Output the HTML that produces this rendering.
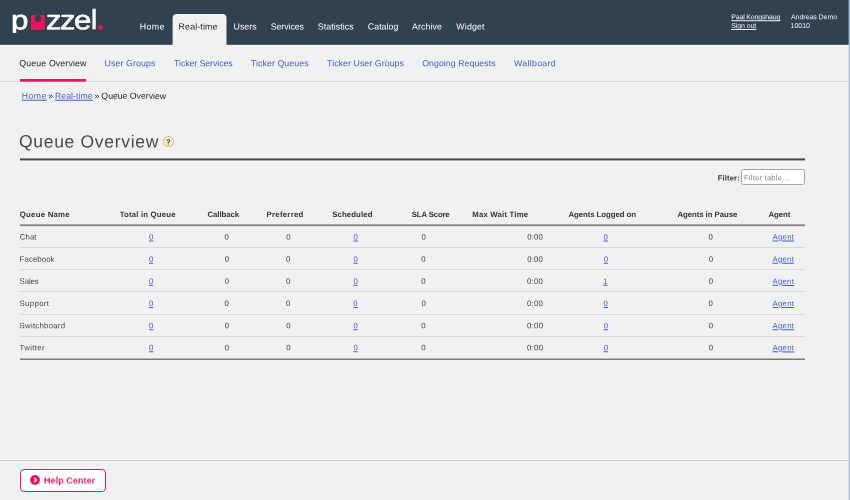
<!DOCTYPE html>
<html lang="en">
<head>
<meta charset="utf-8">
<title>Queue Overview</title>
<style>
*{box-sizing:border-box;margin:0;padding:0}
html,body{width:850px;height:500px;overflow:hidden}
body{background:#f1f1f1;font-family:"Liberation Sans",sans-serif;position:relative}
#wrap{position:absolute;left:0;top:0;width:850px;height:500px;overflow:hidden;will-change:transform}
.t{position:absolute;white-space:pre;line-height:12px;text-decoration:none;transform-origin:0 0}
.u{text-decoration:underline;text-decoration-thickness:0.7px;text-underline-offset:1px}
.b{font-weight:bold}
#hdr{position:absolute;left:0;top:0;width:850px;height:44px;background:#30414f}
#hdr2{position:absolute;left:0;top:44px;width:850px;height:1px;background:#30414f;opacity:.8}
#tab{position:absolute;left:170px;top:12px}
#logo span{position:absolute;color:#fff;font-size:27.4px;line-height:30px;-webkit-text-stroke:0.6px #fff}
#pu{position:absolute;left:30.7px;top:15px;width:14.8px;height:15px;background:#e8175d;border-radius:1.6px;overflow:hidden;color:#e8175d;font-size:10px;line-height:14px;text-align:center}
#pu:before{content:"";position:absolute;left:5.3px;top:-1px;width:4.2px;height:4px;background:#30414f}
#pu:after{content:"";position:absolute;left:4.4px;top:1.3px;width:6px;height:5.3px;background:#30414f;border-radius:50%}
#pdot{position:absolute;left:98.3px;top:25.2px;width:4.8px;height:4.8px;border-radius:50%;background:#e8175d;overflow:hidden;color:#e8175d;font-size:4px;line-height:4px}
#subline{position:absolute;left:0;top:81px;width:848px;height:1px;background:#d9d9d9}
#bar{position:absolute;left:20px;top:79px;width:66px;height:3px;background:linear-gradient(#e8175d 66.6%,rgba(232,23,93,.65) 66.6%)}
#qm{position:absolute;left:163.1px;top:135.9px;width:11px;height:10.7px;border-radius:50%;border:0.8px solid #c6bfa6;background:linear-gradient(#fefbe8,#fbecae)}
#rule{position:absolute;left:20px;top:158px;width:785px;height:3px;background:linear-gradient(#8f8f8f 33.3%,#4a4a4a 33.3%,#4a4a4a 66.6%,#a9a9a9 66.6%)}
#finput{position:absolute;left:741.3px;top:169.1px;width:63.5px;height:15.6px;border:1px solid #a5a5a5;border-radius:2.5px;background:#fff}
.hl{position:absolute;left:20px;width:785px;background:linear-gradient(#a6a6a6 33.3%,#878787 33.3%,#878787 66.6%,#dedede 66.6%);height:3px}
.hl2{position:absolute;left:20px;width:785px;background:linear-gradient(#b4b4b4 50%,#7c7c7c 50%);height:2px}
.rl{position:absolute;left:20px;width:785px;background:#d9d9d9;height:1px}
#foot{position:absolute;left:0;top:460px;width:848px;height:1px;background:#cfcfcf}
#help{position:absolute;left:19.9px;top:468.7px;width:86.1px;height:23.3px;border:1.2px solid #e8175d;border-radius:4px;background:#fff}
#hic{position:absolute;left:28.85px;top:474.1px;width:12px;height:12px}
#edge{position:absolute;left:848px;top:0;width:2px;height:500px;background:linear-gradient(90deg,rgba(166,191,221,.38) 50%,#a6bfdd 50%)}

#t0{left:139px;top:20px;font-size:8.8px;color:#fff;letter-spacing:0.425px;transform:translate(0.69px,0.55px) rotate(0.1deg)}
#t1{left:178px;top:20px;font-size:8.8px;color:#222;letter-spacing:0.141px;transform:translate(0.64px,0.55px) rotate(0.1deg)}
#t2{left:233px;top:20px;font-size:8.8px;color:#fff;letter-spacing:0.005px;transform:translate(0.56px,0.55px) rotate(0.1deg)}
#t3{left:270px;top:20px;font-size:8.8px;color:#fff;letter-spacing:-0.086px;transform:translate(0.79px,0.55px) rotate(0.1deg)}
#t4{left:317px;top:20px;font-size:8.8px;color:#fff;letter-spacing:0.065px;transform:translate(0.83px,0.55px) rotate(0.1deg)}
#t5{left:367px;top:20px;font-size:8.8px;color:#fff;letter-spacing:0.035px;transform:translate(0.84px,0.55px) rotate(0.1deg)}
#t6{left:411px;top:20px;font-size:8.8px;color:#fff;letter-spacing:0.123px;transform:translate(0.93px,0.55px) rotate(0.1deg)}
#t7{left:456px;top:20px;font-size:8.8px;color:#fff;letter-spacing:0.185px;transform:translate(0.27px,0.55px) rotate(0.1deg)}
#t8{left:731px;top:11px;font-size:7px;color:#f0f2f4;letter-spacing:-0.172px;transform:translate(0.27px,0.17px) rotate(0.1deg)}
#t9{left:731px;top:20px;font-size:7px;color:#f0f2f4;letter-spacing:-0.076px;transform:translate(0.17px,0.07px) rotate(0.1deg)}
#t10{left:790px;top:11px;font-size:7px;color:#f0f2f4;letter-spacing:-0.050px;transform:translate(1.00px,0.17px) rotate(0.1deg)}
#t11{left:790px;top:20px;font-size:7px;color:#f0f2f4;letter-spacing:-0.032px;transform:translate(0.57px,0.07px) rotate(0.1deg)}
#t12{left:19px;top:57px;font-size:8.8px;color:#222;letter-spacing:0.111px;transform:translate(0.39px,0.15px) rotate(0.1deg)}
#t13{left:104px;top:57px;font-size:8.8px;color:#465dce;letter-spacing:0.082px;transform:translate(0.61px,0.15px) rotate(0.1deg)}
#t14{left:174px;top:57px;font-size:8.8px;color:#465dce;letter-spacing:-0.088px;transform:translate(0.10px,0.15px) rotate(0.1deg)}
#t15{left:250px;top:57px;font-size:8.8px;color:#465dce;letter-spacing:0.078px;transform:translate(0.85px,0.15px) rotate(0.1deg)}
#t16{left:327px;top:57px;font-size:8.8px;color:#465dce;letter-spacing:0.056px;transform:translate(0.07px,0.15px) rotate(0.1deg)}
#t17{left:422px;top:57px;font-size:8.8px;color:#465dce;letter-spacing:0.031px;transform:translate(0.21px,0.15px) rotate(0.1deg)}
#t18{left:514px;top:57px;font-size:8.8px;color:#465dce;letter-spacing:0.277px;transform:translate(0.13px,0.15px) rotate(0.1deg)}
#t19{left:21px;top:89px;font-size:8.7px;color:#465dce;letter-spacing:0.458px;transform:translate(0.81px,0.79px) rotate(0.1deg)}
#t20{left:48px;top:89px;font-size:8.7px;color:#333;letter-spacing:0.000px;transform:translate(0.24px,0.79px) rotate(0.1deg)}
#t21{left:54px;top:89px;font-size:8.7px;color:#465dce;letter-spacing:0.066px;transform:translate(0.94px,0.79px) rotate(0.1deg)}
#t22{left:94px;top:89px;font-size:8.7px;color:#333;letter-spacing:0.000px;transform:translate(0.49px,0.79px) rotate(0.1deg)}
#t23{left:101px;top:89px;font-size:8.7px;color:#222;letter-spacing:-0.003px;transform:translate(0.39px,0.79px) rotate(0.1deg)}
#t24{left:19px;top:135px;font-size:17.5px;color:#4a4a4a;letter-spacing:0.687px;transform:translate(0.07px,0.34px) rotate(0.1deg)}
#t25{left:165px;top:136px;font-size:7.6px;color:#2b2b2b;letter-spacing:0.000px;transform:translate(0.98px,0.44px) rotate(0.1deg)}
#t26{left:717px;top:172px;font-size:7.6px;color:#333;letter-spacing:0.159px;transform:translate(0.69px,0.44px) rotate(0.1deg)}
#t27{left:743px;top:172px;font-size:7.6px;color:#8a8a8a;letter-spacing:0.230px;transform:translate(0.98px,0.31px) rotate(0.1deg)}
#t28{left:19px;top:208px;font-size:7.8px;color:#333;letter-spacing:0.244px;transform:translate(0.79px,0.98px) rotate(0.1deg)}
#t29{left:119px;top:208px;font-size:7.8px;color:#333;letter-spacing:0.180px;transform:translate(0.69px,0.98px) rotate(0.1deg)}
#t30{left:207px;top:208px;font-size:7.8px;color:#333;letter-spacing:-0.062px;transform:translate(0.48px,0.98px) rotate(0.1deg)}
#t31{left:266px;top:208px;font-size:7.8px;color:#333;letter-spacing:0.254px;transform:translate(0.58px,0.98px) rotate(0.1deg)}
#t32{left:332px;top:208px;font-size:7.8px;color:#333;letter-spacing:0.088px;transform:translate(0.29px,0.98px) rotate(0.1deg)}
#t33{left:411px;top:208px;font-size:7.8px;color:#333;letter-spacing:-0.158px;transform:translate(0.83px,0.98px) rotate(0.1deg)}
#t34{left:472px;top:208px;font-size:7.8px;color:#333;letter-spacing:0.179px;transform:translate(0.28px,0.98px) rotate(0.1deg)}
#t35{left:568px;top:208px;font-size:7.8px;color:#333;letter-spacing:-0.051px;transform:translate(0.40px,0.98px) rotate(0.1deg)}
#t36{left:677px;top:208px;font-size:7.8px;color:#333;letter-spacing:-0.055px;transform:translate(0.41px,0.98px) rotate(0.1deg)}
#t37{left:768px;top:208px;font-size:7.8px;color:#333;letter-spacing:-0.048px;transform:translate(0.42px,0.98px) rotate(0.1deg)}
#t38{left:19px;top:231px;font-size:7.8px;color:#444;letter-spacing:0.100px;transform:translate(0.75px,0.54px) rotate(0.1deg)}
#t39{left:148px;top:231px;font-size:7.8px;color:#465dce;letter-spacing:0.000px;transform:translate(0.97px,0.54px) rotate(0.1deg)}
#t40{left:224px;top:231px;font-size:7.8px;color:#444;letter-spacing:0.000px;transform:translate(0.51px,0.54px) rotate(0.1deg)}
#t41{left:286px;top:231px;font-size:7.8px;color:#444;letter-spacing:0.000px;transform:translate(0.18px,0.54px) rotate(0.1deg)}
#t42{left:353px;top:231px;font-size:7.8px;color:#465dce;letter-spacing:0.000px;transform:translate(0.49px,0.54px) rotate(0.1deg)}
#t43{left:421px;top:231px;font-size:7.8px;color:#444;letter-spacing:0.000px;transform:translate(0.41px,0.54px) rotate(0.1deg)}
#t44{left:527px;top:231px;font-size:7.8px;color:#444;letter-spacing:0.150px;transform:translate(0.24px,0.54px) rotate(0.1deg)}
#t45{left:603px;top:231px;font-size:7.8px;color:#465dce;letter-spacing:0.000px;transform:translate(0.52px,0.54px) rotate(0.1deg)}
#t46{left:708px;top:231px;font-size:7.8px;color:#444;letter-spacing:0.000px;transform:translate(0.51px,0.54px) rotate(0.1deg)}
#t47{left:772px;top:231px;font-size:7.8px;color:#465dce;letter-spacing:0.286px;transform:translate(0.42px,0.54px) rotate(0.1deg)}
#t48{left:19px;top:253px;font-size:7.8px;color:#444;letter-spacing:0.089px;transform:translate(0.63px,0.70px) rotate(0.1deg)}
#t49{left:148px;top:253px;font-size:7.8px;color:#465dce;letter-spacing:0.000px;transform:translate(0.97px,0.70px) rotate(0.1deg)}
#t50{left:224px;top:253px;font-size:7.8px;color:#444;letter-spacing:0.000px;transform:translate(0.67px,0.70px) rotate(0.1deg)}
#t51{left:286px;top:253px;font-size:7.8px;color:#444;letter-spacing:0.000px;transform:translate(0.09px,0.70px) rotate(0.1deg)}
#t52{left:353px;top:253px;font-size:7.8px;color:#465dce;letter-spacing:0.000px;transform:translate(0.41px,0.70px) rotate(0.1deg)}
#t53{left:421px;top:253px;font-size:7.8px;color:#444;letter-spacing:0.000px;transform:translate(0.31px,0.70px) rotate(0.1deg)}
#t54{left:527px;top:253px;font-size:7.8px;color:#444;letter-spacing:0.133px;transform:translate(0.24px,0.70px) rotate(0.1deg)}
#t55{left:603px;top:253px;font-size:7.8px;color:#465dce;letter-spacing:0.000px;transform:translate(0.67px,0.70px) rotate(0.1deg)}
#t56{left:708px;top:253px;font-size:7.8px;color:#444;letter-spacing:0.000px;transform:translate(0.67px,0.70px) rotate(0.1deg)}
#t57{left:772px;top:253px;font-size:7.8px;color:#465dce;letter-spacing:0.246px;transform:translate(0.48px,0.70px) rotate(0.1deg)}
#t58{left:19px;top:275px;font-size:7.8px;color:#444;letter-spacing:-0.117px;transform:translate(0.61px,0.86px) rotate(0.1deg)}
#t59{left:148px;top:275px;font-size:7.8px;color:#465dce;letter-spacing:0.000px;transform:translate(0.97px,0.86px) rotate(0.1deg)}
#t60{left:224px;top:275px;font-size:7.8px;color:#444;letter-spacing:0.000px;transform:translate(0.67px,0.86px) rotate(0.1deg)}
#t61{left:286px;top:275px;font-size:7.8px;color:#444;letter-spacing:0.000px;transform:translate(0.09px,0.86px) rotate(0.1deg)}
#t62{left:353px;top:275px;font-size:7.8px;color:#465dce;letter-spacing:0.000px;transform:translate(0.41px,0.86px) rotate(0.1deg)}
#t63{left:421px;top:275px;font-size:7.8px;color:#444;letter-spacing:0.000px;transform:translate(0.31px,0.86px) rotate(0.1deg)}
#t64{left:527px;top:275px;font-size:7.8px;color:#444;letter-spacing:0.233px;transform:translate(0.05px,0.86px) rotate(0.1deg)}
#t65{left:603px;top:275px;font-size:7.8px;color:#465dce;letter-spacing:0.000px;transform:translate(0.22px,0.86px) rotate(0.1deg)}
#t66{left:708px;top:275px;font-size:7.8px;color:#444;letter-spacing:0.000px;transform:translate(0.67px,0.86px) rotate(0.1deg)}
#t67{left:772px;top:275px;font-size:7.8px;color:#465dce;letter-spacing:0.246px;transform:translate(0.48px,0.86px) rotate(0.1deg)}
#t68{left:19px;top:298px;font-size:7.8px;color:#444;letter-spacing:0.359px;transform:translate(0.51px,0.02px) rotate(0.1deg)}
#t69{left:148px;top:298px;font-size:7.8px;color:#465dce;letter-spacing:0.000px;transform:translate(0.93px,0.02px) rotate(0.1deg)}
#t70{left:224px;top:298px;font-size:7.8px;color:#444;letter-spacing:0.000px;transform:translate(0.62px,0.02px) rotate(0.1deg)}
#t71{left:286px;top:298px;font-size:7.8px;color:#444;letter-spacing:0.000px;transform:translate(0.11px,0.02px) rotate(0.1deg)}
#t72{left:353px;top:298px;font-size:7.8px;color:#465dce;letter-spacing:0.000px;transform:translate(0.35px,0.02px) rotate(0.1deg)}
#t73{left:421px;top:298px;font-size:7.8px;color:#444;letter-spacing:0.000px;transform:translate(0.43px,0.02px) rotate(0.1deg)}
#t74{left:527px;top:298px;font-size:7.8px;color:#444;letter-spacing:0.217px;transform:translate(0.03px,0.02px) rotate(0.1deg)}
#t75{left:603px;top:298px;font-size:7.8px;color:#465dce;letter-spacing:0.000px;transform:translate(0.63px,0.02px) rotate(0.1deg)}
#t76{left:708px;top:298px;font-size:7.8px;color:#444;letter-spacing:0.000px;transform:translate(0.62px,0.02px) rotate(0.1deg)}
#t77{left:772px;top:298px;font-size:7.8px;color:#465dce;letter-spacing:0.236px;transform:translate(0.56px,0.02px) rotate(0.1deg)}
#t78{left:19px;top:320px;font-size:7.8px;color:#444;letter-spacing:0.258px;transform:translate(0.56px,0.18px) rotate(0.1deg)}
#t79{left:148px;top:320px;font-size:7.8px;color:#465dce;letter-spacing:0.000px;transform:translate(0.98px,0.18px) rotate(0.1deg)}
#t80{left:224px;top:320px;font-size:7.8px;color:#444;letter-spacing:0.000px;transform:translate(0.67px,0.18px) rotate(0.1deg)}
#t81{left:286px;top:320px;font-size:7.8px;color:#444;letter-spacing:0.000px;transform:translate(0.18px,0.18px) rotate(0.1deg)}
#t82{left:353px;top:320px;font-size:7.8px;color:#465dce;letter-spacing:0.000px;transform:translate(0.39px,0.18px) rotate(0.1deg)}
#t83{left:421px;top:320px;font-size:7.8px;color:#444;letter-spacing:0.000px;transform:translate(0.24px,0.18px) rotate(0.1deg)}
#t84{left:527px;top:320px;font-size:7.8px;color:#444;letter-spacing:0.236px;transform:translate(0.10px,0.18px) rotate(0.1deg)}
#t85{left:603px;top:320px;font-size:7.8px;color:#465dce;letter-spacing:0.000px;transform:translate(0.66px,0.18px) rotate(0.1deg)}
#t86{left:708px;top:320px;font-size:7.8px;color:#444;letter-spacing:0.000px;transform:translate(0.67px,0.18px) rotate(0.1deg)}
#t87{left:772px;top:320px;font-size:7.8px;color:#465dce;letter-spacing:0.247px;transform:translate(0.55px,0.18px) rotate(0.1deg)}
#t88{left:19px;top:342px;font-size:7.8px;color:#444;letter-spacing:0.371px;transform:translate(0.50px,0.34px) rotate(0.1deg)}
#t89{left:148px;top:342px;font-size:7.8px;color:#465dce;letter-spacing:0.000px;transform:translate(0.98px,0.34px) rotate(0.1deg)}
#t90{left:224px;top:342px;font-size:7.8px;color:#444;letter-spacing:0.000px;transform:translate(0.67px,0.34px) rotate(0.1deg)}
#t91{left:286px;top:342px;font-size:7.8px;color:#444;letter-spacing:0.000px;transform:translate(0.18px,0.34px) rotate(0.1deg)}
#t92{left:353px;top:342px;font-size:7.8px;color:#465dce;letter-spacing:0.000px;transform:translate(0.39px,0.34px) rotate(0.1deg)}
#t93{left:421px;top:342px;font-size:7.8px;color:#444;letter-spacing:0.000px;transform:translate(0.24px,0.34px) rotate(0.1deg)}
#t94{left:527px;top:342px;font-size:7.8px;color:#444;letter-spacing:0.236px;transform:translate(0.10px,0.34px) rotate(0.1deg)}
#t95{left:603px;top:342px;font-size:7.8px;color:#465dce;letter-spacing:0.000px;transform:translate(0.66px,0.34px) rotate(0.1deg)}
#t96{left:708px;top:342px;font-size:7.8px;color:#444;letter-spacing:0.000px;transform:translate(0.67px,0.34px) rotate(0.1deg)}
#t97{left:772px;top:342px;font-size:7.8px;color:#465dce;letter-spacing:0.247px;transform:translate(0.55px,0.34px) rotate(0.1deg)}
#t98{left:43px;top:474px;font-size:9px;color:#e8175d;letter-spacing:0.074px;transform:translate(0.90px,0.48px) rotate(0.1deg)}
</style>
</head>
<body>
<div id="wrap">
<div id="hdr"></div><div id="hdr2"></div>
<svg id="tab" width="60" height="33" viewBox="0 0 60 33"><path d="M2.6 33 V6.1 a4 4 0 0 1 4 -4 H52.5 a4 4 0 0 1 4 4 V33 Z" fill="#f1f1f1"/></svg>
<div id="logo">
<span style="left:11.0px;top:5px;font-size:27px;transform:translateY(0.14px) rotate(0.1deg) scaleX(1.16);transform-origin:0 0;clip-path:inset(0 0 2.2px 0)">p</span>
<div id="pu">u</div>
<span style="left:46.1px;top:5px;font-size:27px;transform:translateY(0.14px) rotate(0.1deg) scaleX(1.137);transform-origin:0 0">z</span>
<span style="left:60.4px;top:5px;font-size:27px;transform:translateY(0.14px) rotate(0.1deg) scaleX(1.137);transform-origin:0 0">z</span>
<span style="left:74.0px;top:5px;font-size:27px;transform:translateY(0.14px) rotate(0.1deg) scaleX(1.16);transform-origin:0 0">e</span>
<span style="left:91.4px;top:5px;font-size:27.4px;transform:translateY(0.01px) rotate(0.1deg) scaleX(1);transform-origin:0 0">l</span>
<div id="pdot">.</div></div>
<div id="subline"></div><div id="bar"></div>
<div id="qm"></div><div id="rule"></div><div id="finput"></div>
<div class="hl" style="top:224px"></div>
<div class="rl" style="top:247px"></div>
<div class="rl" style="top:269px"></div>
<div class="rl" style="top:291px"></div>
<div class="rl" style="top:314px"></div>
<div class="rl" style="top:336px"></div>
<div class="hl2" style="top:358px"></div>
<div id="foot"></div><div id="help"></div>
<svg id="hic" viewBox="0 0 12 12"><circle cx="6" cy="6" r="4.9" fill="#e8175d"/><path d="M5.4 4 L7.3 6 L5.4 8" fill="none" stroke="#fff" stroke-width="1.3"/></svg>
<div class="t" id="t0">Home</div>
<div class="t" id="t1">Real-time</div>
<div class="t" id="t2">Users</div>
<div class="t" id="t3">Services</div>
<div class="t" id="t4">Statistics</div>
<div class="t" id="t5">Catalog</div>
<div class="t" id="t6">Archive</div>
<div class="t" id="t7">Widget</div>
<a class="t u" id="t8">Paal Kongshaug</a>
<a class="t u" id="t9">Sign out</a>
<div class="t" id="t10">Andreas Demo</div>
<div class="t" id="t11">10010</div>
<div class="t" id="t12">Queue Overview</div>
<a class="t" id="t13">User Groups</a>
<a class="t" id="t14">Ticker Services</a>
<a class="t" id="t15">Ticker Queues</a>
<a class="t" id="t16">Ticker User Groups</a>
<a class="t" id="t17">Ongoing Requests</a>
<a class="t" id="t18">Wallboard</a>
<a class="t u" id="t19">Home</a>
<div class="t" id="t20">»</div>
<a class="t u" id="t21">Real-time</a>
<div class="t" id="t22">»</div>
<div class="t" id="t23">Queue Overview</div>
<div class="t" id="t24">Queue Overview</div>
<div class="t b" id="t25">?</div>
<div class="t b" id="t26">Filter:</div>
<div class="t" id="t27">Filter table...</div>
<div class="t b" id="t28">Queue Name</div>
<div class="t b" id="t29">Total in Queue</div>
<div class="t b" id="t30">Callback</div>
<div class="t b" id="t31">Preferred</div>
<div class="t b" id="t32">Scheduled</div>
<div class="t b" id="t33">SLA Score</div>
<div class="t b" id="t34">Max Wait Time</div>
<div class="t b" id="t35">Agents Logged on</div>
<div class="t b" id="t36">Agents in Pause</div>
<div class="t b" id="t37">Agent</div>
<div class="t" id="t38">Chat</div>
<a class="t u" id="t39">0</a>
<div class="t" id="t40">0</div>
<div class="t" id="t41">0</div>
<a class="t u" id="t42">0</a>
<div class="t" id="t43">0</div>
<div class="t" id="t44">0:00</div>
<a class="t u" id="t45">0</a>
<div class="t" id="t46">0</div>
<a class="t u" id="t47">Agent</a>
<div class="t" id="t48">Facebook</div>
<a class="t u" id="t49">0</a>
<div class="t" id="t50">0</div>
<div class="t" id="t51">0</div>
<a class="t u" id="t52">0</a>
<div class="t" id="t53">0</div>
<div class="t" id="t54">0:00</div>
<a class="t u" id="t55">0</a>
<div class="t" id="t56">0</div>
<a class="t u" id="t57">Agent</a>
<div class="t" id="t58">Sales</div>
<a class="t u" id="t59">0</a>
<div class="t" id="t60">0</div>
<div class="t" id="t61">0</div>
<a class="t u" id="t62">0</a>
<div class="t" id="t63">0</div>
<div class="t" id="t64">0:00</div>
<a class="t u" id="t65">1</a>
<div class="t" id="t66">0</div>
<a class="t u" id="t67">Agent</a>
<div class="t" id="t68">Support</div>
<a class="t u" id="t69">0</a>
<div class="t" id="t70">0</div>
<div class="t" id="t71">0</div>
<a class="t u" id="t72">0</a>
<div class="t" id="t73">0</div>
<div class="t" id="t74">0:00</div>
<a class="t u" id="t75">0</a>
<div class="t" id="t76">0</div>
<a class="t u" id="t77">Agent</a>
<div class="t" id="t78">Switchboard</div>
<a class="t u" id="t79">0</a>
<div class="t" id="t80">0</div>
<div class="t" id="t81">0</div>
<a class="t u" id="t82">0</a>
<div class="t" id="t83">0</div>
<div class="t" id="t84">0:00</div>
<a class="t u" id="t85">0</a>
<div class="t" id="t86">0</div>
<a class="t u" id="t87">Agent</a>
<div class="t" id="t88">Twitter</div>
<a class="t u" id="t89">0</a>
<div class="t" id="t90">0</div>
<div class="t" id="t91">0</div>
<a class="t u" id="t92">0</a>
<div class="t" id="t93">0</div>
<div class="t" id="t94">0:00</div>
<a class="t u" id="t95">0</a>
<div class="t" id="t96">0</div>
<a class="t u" id="t97">Agent</a>
<div class="t b" id="t98">Help Center</div>
<div id="edge"></div>
</div>
</body>
</html>
